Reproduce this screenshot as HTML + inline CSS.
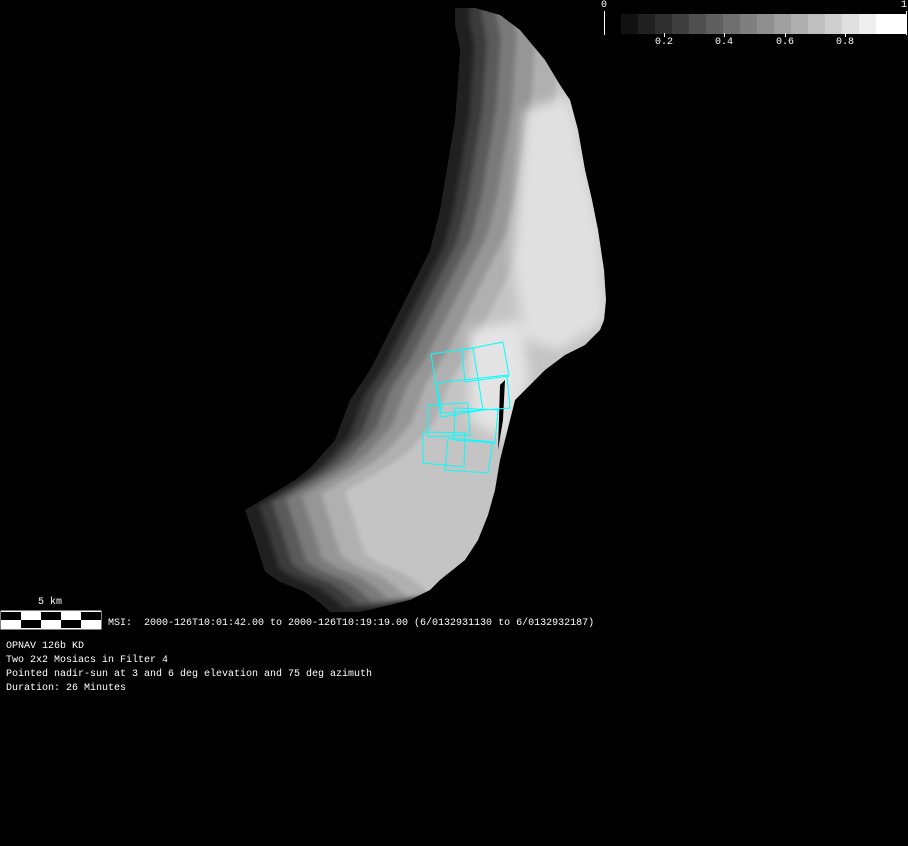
<!DOCTYPE html>
<html><head><meta charset="utf-8"><style>
html,body{margin:0;padding:0;background:#000;}
body{width:908px;height:846px;overflow:hidden;position:relative;}
.t{position:absolute;font-family:"Liberation Mono",monospace;font-size:10px;color:#fff;white-space:pre;line-height:12px;}
</style></head><body>
<svg width="908" height="846" style="position:absolute;left:0;top:0" xmlns="http://www.w3.org/2000/svg">
<defs>
<path id="ast" d="M455,8 L475,8 L500,15 L520,30 L545,60 L560,85 L570,100 L578,130 L585,170 L592,200 L598,230 L604,270 L606,300 L604,320 L600,330 L585,345 L565,355 L545,370 L525,390 L515,400 L510,420 L505,440 L500,460 L495,490 L488,515 L478,540 L465,560 L440,580 L430,590 L410,600 L390,605 L360,612 L330,612 L320,603 L305,592 L280,582 L265,572 L255,540 L245,510 L270,495 L295,480 L310,468 L335,440 L350,400 L370,370 L380,350 L395,320 L410,290 L420,270 L430,250 L440,210 L445,180 L450,150 L455,120 L458,80 L460,50 L455,25 Z"/>
<clipPath id="cp"><use href="#ast"/></clipPath>
<filter id="bl" x="-20%" y="-20%" width="140%" height="140%"><feGaussianBlur stdDeviation="2.5"/></filter>
<filter id="bl2" x="-20%" y="-20%" width="140%" height="140%"><feGaussianBlur stdDeviation="6"/></filter>
</defs>
<g clip-path="url(#cp)">
<use href="#ast" fill="#202020"/>
<g filter="url(#bl)">
<use href="#ast" fill="#3a3a3a" transform="translate(14,-4)"/>
<use href="#ast" fill="#5a5a5a" transform="translate(27,-8)"/>
<use href="#ast" fill="#7a7a7a" transform="translate(41,-11)"/>
<use href="#ast" fill="#969696" transform="translate(57,-14)"/>
<use href="#ast" fill="#b0b0b0" transform="translate(76,-16)"/>
<use href="#ast" fill="#c4c4c4" transform="translate(100,-18)"/>
</g>
<g filter="url(#bl2)">
<polygon points="525,110 570,95 600,230 606,320 560,350 525,340 512,260" fill="#e0e0e0"/>
<polygon points="470,330 520,320 530,380 505,440 470,420" fill="#e4e4e4"/>
</g>
<path d="M500,385 L505,380 L503,420 L498,450 Z" fill="#000"/>
</g>
<g fill="none" stroke="#00ffff" stroke-width="1">
<polygon points="431,354 473,348 483,410 441,417"/>
<polygon points="462,350 503,342 509,376 465,382"/>
<polygon points="436,383 507,375 510,408 442,413"/>
<polygon points="428,405 468,403 470,435 428,437"/>
<polygon points="455,408 498,410 495,443 454,440"/>
<polygon points="423,432 465,433 464,467 423,463"/>
<polygon points="448,438 493,442 488,473 445,470"/>
</g>
<g>
<rect x="621" y="14" width="17" height="20" fill="#111"/>
<rect x="638" y="14" width="17" height="20" fill="#202020"/>
<rect x="655" y="14" width="17" height="20" fill="#2f2f2f"/>
<rect x="672" y="14" width="17" height="20" fill="#3f3f3f"/>
<rect x="689" y="14" width="17" height="20" fill="#4f4f4f"/>
<rect x="706" y="14" width="17" height="20" fill="#5f5f5f"/>
<rect x="723" y="14" width="17" height="20" fill="#6f6f6f"/>
<rect x="740" y="14" width="17" height="20" fill="#7f7f7f"/>
<rect x="757" y="14" width="17" height="20" fill="#8f8f8f"/>
<rect x="774" y="14" width="17" height="20" fill="#9f9f9f"/>
<rect x="791" y="14" width="17" height="20" fill="#afafaf"/>
<rect x="808" y="14" width="17" height="20" fill="#bfbfbf"/>
<rect x="825" y="14" width="17" height="20" fill="#cfcfcf"/>
<rect x="842" y="14" width="17" height="20" fill="#dfdfdf"/>
<rect x="859" y="14" width="17" height="20" fill="#efefef"/>
<rect x="876" y="14" width="31" height="20" fill="#fff"/>
</g>
<g stroke="#fff" stroke-width="1">
<line x1="604.5" y1="11" x2="604.5" y2="35"/>
<line x1="906.5" y1="11" x2="906.5" y2="35"/>
<line x1="664.5" y1="33" x2="664.5" y2="37"/>
<line x1="724.5" y1="33" x2="724.5" y2="37"/>
<line x1="785.5" y1="33" x2="785.5" y2="37"/>
<line x1="845.5" y1="33" x2="845.5" y2="37"/>
</g>
<rect x="0.5" y="610.5" width="101" height="19" fill="#fff"/>
<g fill="#000">
<rect x="1" y="612" width="20" height="8"/><rect x="41" y="612" width="20" height="8"/><rect x="81" y="612" width="20" height="8"/>
<rect x="21" y="620" width="20" height="8"/><rect x="61" y="620" width="20" height="8"/>
</g>
</svg>
<div class="t" style="left:601px;top:0px">0</div>
<div class="t" style="left:901px;top:0px">1</div>
<div class="t" style="left:655px;top:37px">0.2</div>
<div class="t" style="left:715px;top:37px">0.4</div>
<div class="t" style="left:776px;top:37px">0.6</div>
<div class="t" style="left:836px;top:37px">0.8</div>
<div class="t" style="left:38px;top:597px">5 km</div>
<div class="t" style="left:108px;top:618px">MSI:  2000-126T10:01:42.00 to 2000-126T10:19:19.00 (6/0132931130 to 6/0132932187)</div>
<div class="t" style="left:6px;top:641px">OPNAV 126b KD</div>
<div class="t" style="left:6px;top:655px">Two 2x2 Mosiacs in Filter 4</div>
<div class="t" style="left:6px;top:669px">Pointed nadir-sun at 3 and 6 deg elevation and 75 deg azimuth</div>
<div class="t" style="left:6px;top:683px">Duration: 26 Minutes</div>
</body></html>
